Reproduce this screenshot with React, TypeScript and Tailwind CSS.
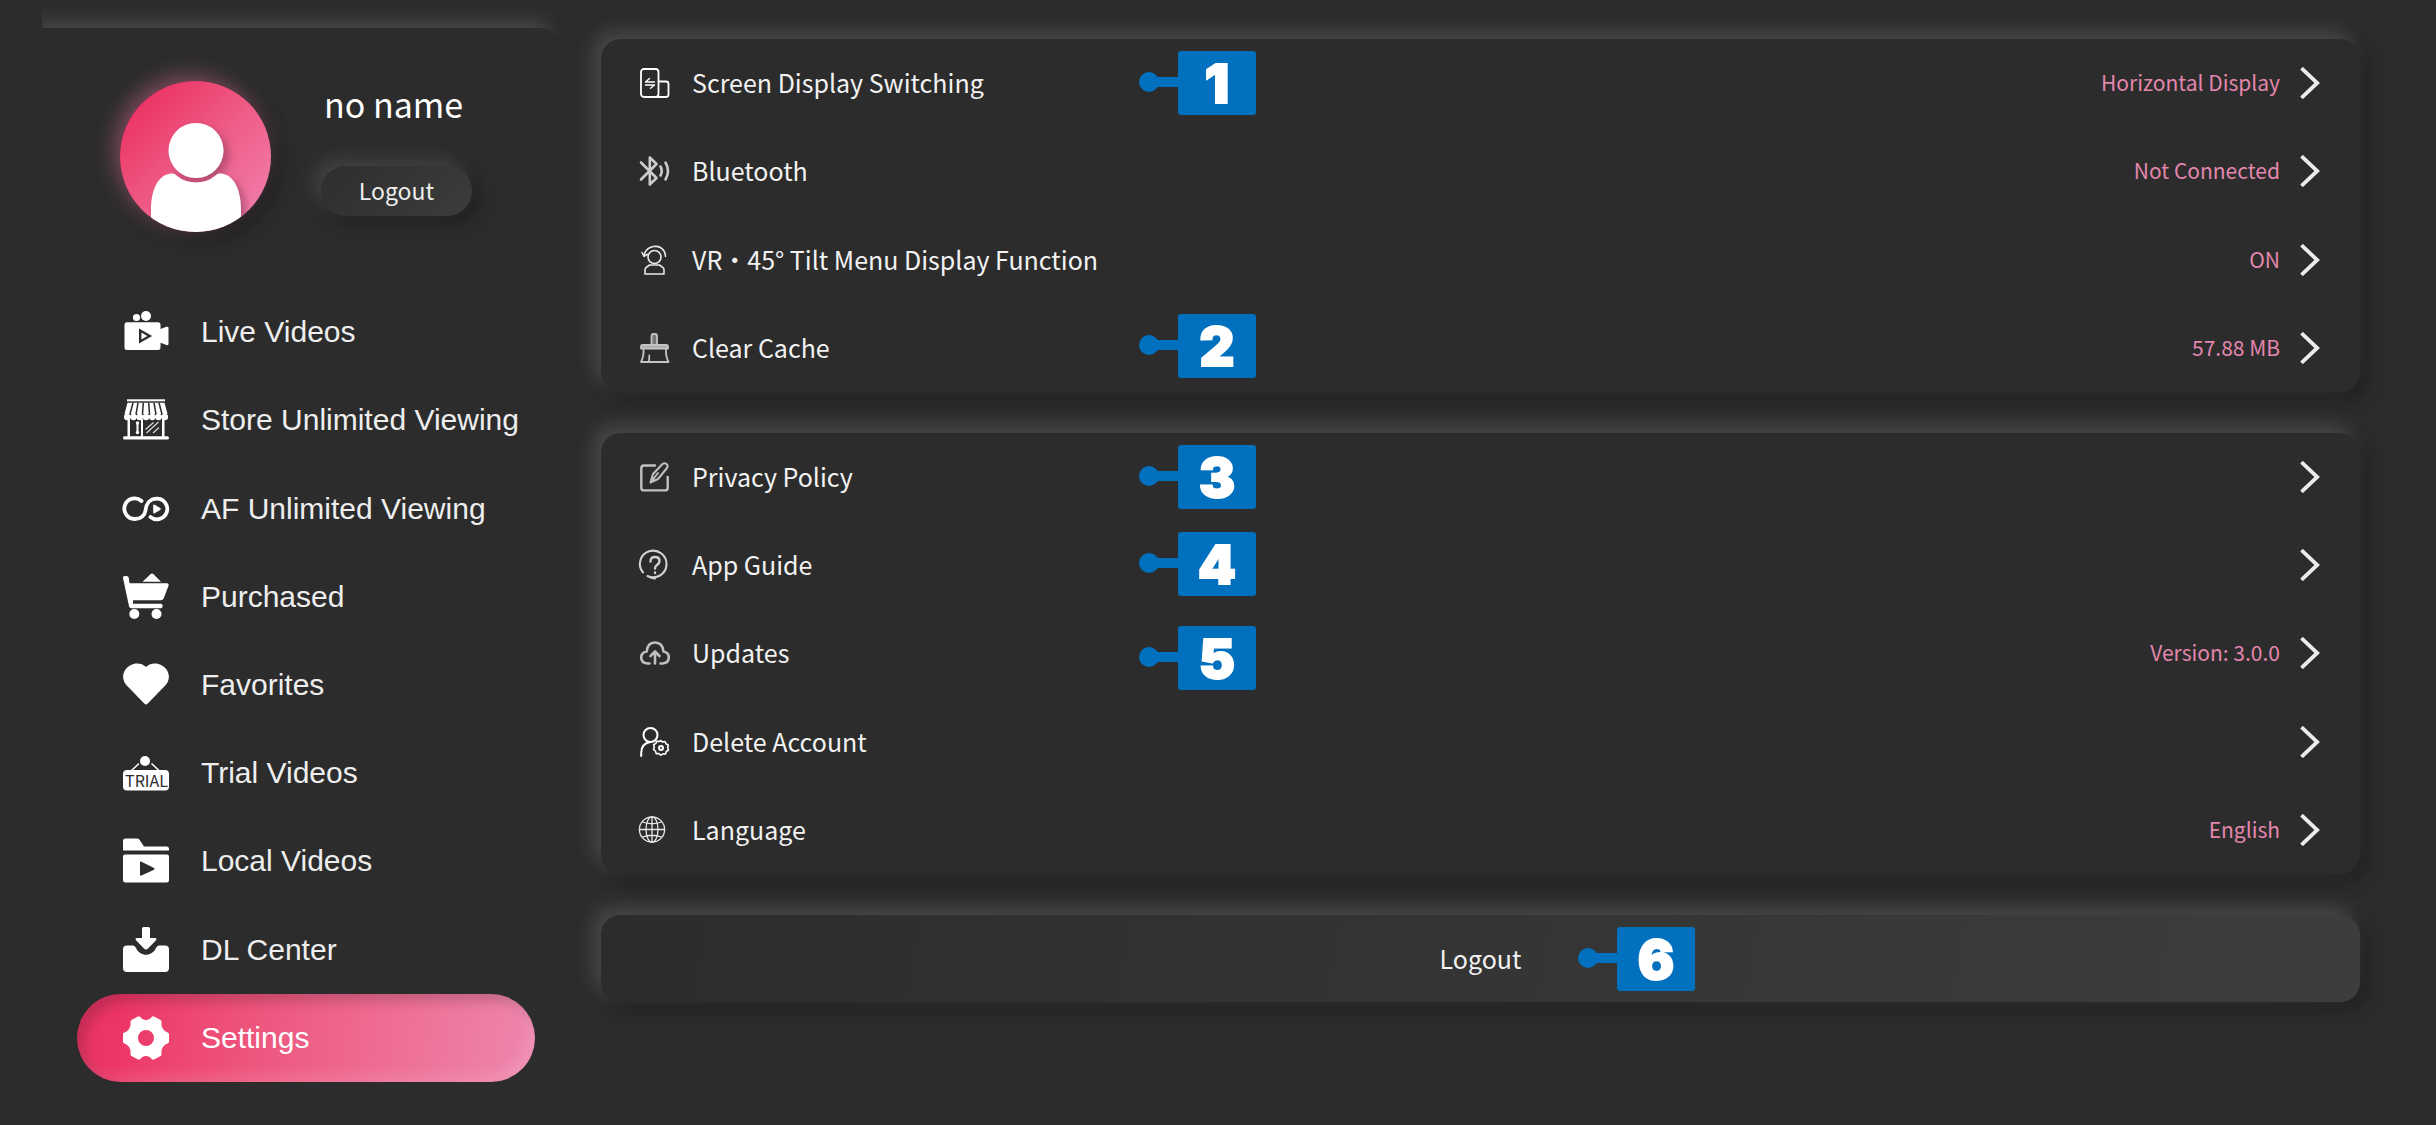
import type { ReactNode } from 'react';

const cjk = "font-['Noto_Sans_CJK_JP',sans-serif]";

/* ---------- sidebar icons (48 x 48 box) ---------- */

function NavSvg({ children }: { children: ReactNode }) {
  return (
    <svg viewBox="0 0 48 48" className="size-12 shrink-0" fill="#fff" aria-hidden="true">
      {children}
    </svg>
  );
}

const LiveIcon = () => (
  <NavSvg>
    <circle cx="14.500" cy="9.500" r="3.600" />
    <circle cx="24" cy="8" r="5" />
    <path d="M5 14.300h31a2.500 2.500 0 0 1 2.500 2.500v4.200l6-2.200q2-.6 2 1.200v16q0 1.600-2 1l-6-2.200v4.600a2.500 2.500 0 0 1-2.500 2.500H5a2.500 2.500 0 0 1-2.500-2.500V16.800A2.500 2.500 0 0 1 5 14.300z" />
    <path d="M18.200 22.500v11l9.500-5.500z" fill="none" stroke="#2c2c2c" strokeWidth="2.400" />
  </NavSvg>
);

const StoreIcon = () => (
  <NavSvg>
    <rect x="5" y="3.300" width="38" height="2" />
    <path d="M5.500 6.800h37l3.500 13v2H2v-2z" />
    <g stroke="#2c2c2c" strokeWidth="1.500">
      <path d="M11 6.800 8 18.300M16 6.800l-2 11.500M21.300 6.800l-.8 11.500M26.700 6.800l.8 11.500M32 6.800l2 11.500M37 6.800l3 11.500" />
    </g>
    <rect x="1.500" y="18" width="45" height="1.400" fill="#2c2c2c" />
    {[5.2, 11.5, 17.7, 24, 30.3, 36.5, 42.8].map((x) => (
      <circle key={x} cx={x} cy="21" r="3.200" />
    ))}
    <rect x="5.500" y="23" width="2.500" height="18" />
    <rect x="19" y="23" width="2" height="18" />
    <rect x="40" y="23" width="2.500" height="18" />
    <rect x="1" y="40.300" width="46" height="3.200" rx="1.600" />
    <rect x="14.500" y="27" width="2" height="9" />
    <circle cx="15.500" cy="27" r="1.700" />
    <circle cx="15.500" cy="36.500" r="1.700" />
    <path d="M23.500 33.500l8-7M24.500 37l12-11M31 37l6-5.500" stroke="#ddd" strokeWidth="1.200" />
  </NavSvg>
);

const InfinityIcon = () => (
  <NavSvg>
    <path
      d="M19.500 16A10.300 10.300 0 1 0 12.800 34C19.500 34 22.800 30 23.500 25.500C24 19.500 27.500 13.700 35 13.700A10.300 10.300 0 1 1 28.500 32"
      fill="none"
      stroke="#fff"
      strokeWidth="3.800"
      strokeLinecap="round"
    />
    <path d="M31.200 20.600q0-1.700 1.500-.9l5.500 3.400q1.200.9 0 1.800L32.700 28.300q-1.500.8-1.500-.9z" />
  </NavSvg>
);

const CartIcon = () => (
  <NavSvg>
    <path d="M20.500 8.700 28.500 1.200q1.500-1.200 3 0l7.500 7.500z" />
    <path d="M7.500 10.300h37.500q2.200.3 1.500 2.500l-4.700 12.500q-.9 2-3 2H11v3.500h28q1.700.3 1.700 2.200t-1.700 2.200H9.500q-2 0-2.500-2L1 5q-.3-2 2-2h1.500q2 0 2.300 2z" />
    <circle cx="12.300" cy="41" r="5" />
    <circle cx="34.500" cy="41" r="5" />
  </NavSvg>
);

const HeartIcon = () => (
  <NavSvg>
    <path d="M24 6C28 2.200 34.500 1.600 39.500 4.200C47.500 8.500 49.500 18 43 24.800L25.500 42.800q-1.500 1.400-3 0L5 24.800C-1.500 18 .5 8.500 8.500 4.200C13.500 1.600 20 2.200 24 6z" />
  </NavSvg>
);

const TrialIcon = () => (
  <NavSvg>
    <circle cx="23" cy="12" r="5" />
    <path d="M17 14.500 9.500 21.500M29.500 14.500l7.500 7" stroke="#fff" strokeWidth="1.600" />
    <rect x="1" y="21" width="46" height="20.500" rx="4" />
    <text
      x="24.500"
      y="37.500"
      textAnchor="middle"
      fontFamily="'Noto Sans CJK JP', sans-serif"
      fontSize="16"
      fill="#2c2c2c"
    >
      TRIAL
    </text>
  </NavSvg>
);

const FolderIcon = () => (
  <NavSvg>
    <path d="M1 13.500V4q0-2.500 2.500-2.500H15q1.500 0 2.500 1.200L22 9.500h22.500q2.500 0 2.500 2.500v1.500z" />
    <path
      fillRule="evenodd"
      d="M3 17.500h42q2 0 2 2V43q0 2.500-2.500 2.500h-41Q1 45.500 1 43V19.500q0-2 2-2zM18 25.500v12q0 1.500 1.500 1l12-5.500q2-1.200 0-2.300l-12-6q-1.500-.6-1.500.8z"
    />
  </NavSvg>
);

const DownloadIcon = () => (
  <NavSvg>
    <path d="M21.500 1h5q1.500 0 1.500 1.500V12h5.500q1.800.6.500 2.200l-8.200 8.600q-1.800 1.500-3.600 0l-8.200-8.600q-1.300-1.600.5-2.200H20V2.500Q20 1 21.500 1z" />
    <path d="M5 19.500h6q2 0 3 2.500c4 9 16 9 20 0q1-2.500 3-2.500h6q4 0 4 4V42q0 4-4 4H5q-4 0-4-4V23.500q0-4 4-4z" />
  </NavSvg>
);

const GearIcon = () => (
  <NavSvg>
    <path
      fillRule="evenodd"
      d="M8.500 8q0-1 1-2l6-3.300q1.800-.9 3 .5l1.500 1.600q4 2.400 8 0l1.500-1.600q1.200-1.400 3-.5l6 3.300q1.300 1 1 2.200-.8 5.800 4 9.300l2.200 1q1.300.7 1.300 2v7q0 1.300-1.300 2l-2.200 1q-4.800 3.500-4 9.300.3 1.200-1 2.200l-6 3.300q-1.800.9-3-.5L28 43.200q-4-2.400-8 0l-1.500 1.600q-1.200 1.400-3 .5l-6-3.300q-1.300-1-1-2.200.8-5.800-4-9.300l-2.200-1Q1 28.800 1 27.500v-7q0-1.300 1.300-2l2.200-1q4.800-3.500 4-9.500zM24 16a8 8 0 1 0 0 16 8 8 0 0 0 0-16z"
    />
  </NavSvg>
);

/* ---------- setting row icons (30 x 30 box) ---------- */

function RowSvg({ children, width = 1.8, color = '#e8e8e8' }: { children: ReactNode; width?: number; color?: string }) {
  return (
    <svg
      viewBox="0 0 30 30"
      className="size-[30px] shrink-0 overflow-visible"
      fill="none"
      stroke={color}
      strokeWidth={width}
      strokeLinecap="round"
      strokeLinejoin="round"
      aria-hidden="true"
    >
      {children}
    </svg>
  );
}

const ScreenIcon = () => (
  <RowSvg color="#fff">
    <rect x="1" y="1" width="17.500" height="28" rx="3" />
    <path d="M18.500 13.500H26q2.500 0 2.500 2.500v10.500q0 2.500-2.500 2.500H15" />
    <path d="M5.500 14h9M5.500 14l4-3.500M14.500 17h-9M14.500 17l-4 3.200" strokeWidth="1.400" />
  </RowSvg>
);

const BluetoothIcon = () => (
  <RowSvg width={2.6} color="#cccccc">
    <path d="M1 6.500 16.500 22 9.800 28.500V1.500L16.500 8 1 23.500" />
    <path d="M20.500 10.500q2.500 4.500 0 9M25.500 6.500q5 8.500 0 17" />
  </RowSvg>
);

const TiltIcon = () => (
  <RowSvg width={1.6}>
    <circle cx="14.500" cy="12" r="6.500" />
    <path d="M5 29v-4q0-1.500 1-2.300L9.500 20h10l3.500 2.700q1 .8 1 2.300v4z" />
    <path d="M4.200 9.500C7 .5 19-1.500 24 6q1.200 2 1.500 5.500M2 7.500l2 3.800 3.500-2" />
  </RowSvg>
);

const BroomIcon = () => (
  <RowSvg color="#c4c4c4">
    <path d="M11.500 12V3q0-2 2-2h1.500q2 0 2 2v9" fill="#777" />
    <path d="M1 15.500v-2q0-1.500 1.500-1.500h24q1.500 0 1.500 1.500v2z" fill="#aaa" />
    <path d="M3.500 16Q4 23 1 29h27.500Q25.500 23 26 16M8.500 29q1-3 .8-6.500" />
  </RowSvg>
);

const EditIcon = () => (
  <RowSvg width={2.4} color="#c0c0c0">
    <path d="M15 3.500H4q-2.700 0-2.700 2.700v19.500q0 2.700 2.700 2.700h21q2.700 0 2.700-2.700V15" />
    <path d="M10.500 20.500 13 12 22.500 2q2-1.500 4 0t.5 4L18 17zM10.500 20.500 18 11" strokeWidth="2" />
  </RowSvg>
);

const HelpIcon = () => (
  <RowSvg width={2.1} color="#d2d2d2">
    <path d="M3 22.500A13.300 13.300 0 1 1 7.500 26M7.500 26q3.500 2.400 7.500 2.400" />
    <path d="M10.500 11.500q0-4.500 4.500-4.500t4.500 4q0 2.300-2.500 4-2 1.200-2 3.500M15 22.500v.5" strokeWidth="2.400" />
  </RowSvg>
);

const CloudIcon = () => (
  <RowSvg width={2.600} color="#c0c0c0">
    <path d="M9.500 25.500H7.500Q1.200 25 1.200 19.500q0-5 5.500-6Q7.500 4.500 15 4.500t8.500 9q5.300 1 5.300 6 0 5.500-6.300 6H20.500" />
    <path d="M15 25.500V14M10.500 18l4.500-4.500 4.500 4.500" />
  </RowSvg>
);

const AccountIcon = () => (
  <RowSvg color="#fff" width={2}>
    <circle cx="10.500" cy="8" r="7" />
    <path d="M1.200 29v-3q0-9.500 9-11" />
    <path
      d="M20.500 13.500l2 1.500 2.500-.5 1 2.300 2.200 1.200-.5 2.500.8 2.500-2.200 1.500-.8 2.500-2.500-.2-2.200 1.400-2-1.600-2.600 0-.7-2.500-2-1.600.8-2.300-.7-2.500 2.200-1.300 1-2.300 2.500.4z"
      strokeWidth="1.600"
    />
    <circle cx="21" cy="21" r="2" />
  </RowSvg>
);

const GlobeIcon = () => (
  <RowSvg width={1.3}>
    <circle cx="12" cy="14.500" r="12.600" />
    <ellipse cx="12" cy="14.500" rx="6" ry="12.600" />
    <path d="M12 2v25M-.5 14.500h25M2.500 7q9.500 3.500 19 0M2.500 22q9.500-3.500 19 0" />
  </RowSvg>
);

const Chevron = () => (
  <svg viewBox="0 0 20 32" className="h-8 w-5 shrink-0" fill="none" stroke="#ececec" strokeWidth="3.800" aria-hidden="true">
    <path d="M1.500 1.200 17.200 16 1.500 30.800" />
  </svg>
);

/* ---------- numbered callout ---------- */

function Callout({ label, place }: { label: string; place: string }) {
  return (
    <div className={`pointer-events-none absolute flex items-center ${place}`}>
      <span className="flex items-center pb-[3px]">
        <span className="size-5 rounded-full bg-[#0070bf]" />
        <span className="-ml-1 h-2.5 w-[23px] bg-[#0070bf]" />
      </span>
      <span className="flex h-16 w-[78px] items-center justify-center rounded-[3px] bg-[#0070bf] pt-0.5 font-['Inter',sans-serif] text-[54px] leading-[62px] font-black text-white [-webkit-text-stroke:2px_#fff]">
        {label}
      </span>
    </div>
  );
}

/* ---------- data ---------- */

const nav = [
  { label: 'Live Videos', Icon: LiveIcon },
  { label: 'Store Unlimited Viewing', Icon: StoreIcon },
  { label: 'AF Unlimited Viewing', Icon: InfinityIcon },
  { label: 'Purchased', Icon: CartIcon },
  { label: 'Favorites', Icon: HeartIcon },
  { label: 'Trial Videos', Icon: TrialIcon },
  { label: 'Local Videos', Icon: FolderIcon },
  { label: 'DL Center', Icon: DownloadIcon },
  { label: 'Settings', Icon: GearIcon, active: true },
];

type Row = { label: string; value?: string; Icon: () => ReactNode };

const display: Row[] = [
  { label: 'Screen Display Switching', value: 'Horizontal Display', Icon: ScreenIcon },
  { label: 'Bluetooth', value: 'Not Connected', Icon: BluetoothIcon },
  { label: 'VR・45° Tilt Menu Display Function', value: 'ON', Icon: TiltIcon },
  { label: 'Clear Cache', value: '57.88 MB', Icon: BroomIcon },
];

const about: Row[] = [
  { label: 'Privacy Policy', Icon: EditIcon },
  { label: 'App Guide', Icon: HelpIcon },
  { label: 'Updates', value: 'Version: 3.0.0', Icon: CloudIcon },
  { label: 'Delete Account', Icon: AccountIcon },
  { label: 'Language', value: 'English', Icon: GlobeIcon },
];

const raised = 'shadow-[-8px_-8px_18px_#484848,8px_8px_16px_#222222]';

function Card({ rows, size, children }: { rows: Row[]; size: string; children: ReactNode }) {
  return (
    <section className={`relative grid auto-rows-fr rounded-[20px] bg-[#2c2c2c] ${raised} ${size}`}>
      {rows.map(({ label, value, Icon }) => (
        <button key={label} type="button" className="flex items-center pr-10 pl-[39px] text-left">
          <Icon />
          <span className="ml-[22px] flex-1 pb-0.5 text-[25px] leading-10 text-[#f2f2f2]">{label}</span>
          {value && <span className="mr-5 pb-0.5 text-[21px] leading-8 text-[#e387ac]">{value}</span>}
          <Chevron />
        </button>
      ))}
      {children}
    </section>
  );
}

function Avatar() {
  return (
    <div className="size-[151px] shrink-0 rounded-full bg-linear-135 from-[#ec3566] from-15% to-[#f083b3] shadow-[-6px_-6px_20px_#7a4a5e,8px_8px_16px_#202020]">
      <svg viewBox="0 0 151 151" className="size-full overflow-hidden rounded-full" role="img" aria-label="Profile picture">
        <defs>
          <filter id="soft" x="-30%" y="-30%" width="160%" height="160%">
            <feDropShadow dx="5" dy="5" stdDeviation="4" floodColor="#8c3a5c" floodOpacity="0.6" />
          </filter>
        </defs>
        <g fill="#fff" filter="url(#soft)">
          <ellipse cx="76" cy="69.500" rx="27.500" ry="27.500" />
          <path d="M31 151v-22c0-20 7-36 21-36.500q3 0 4.500 2 8 7 19.500 7t19.500-7q1.500-2 4.500-2c14 .5 21 16.500 21 36.500v22z" />
        </g>
      </svg>
    </div>
  );
}

export default function App() {
  return (
    <div className={`flex min-h-screen bg-[#2c2c2c] text-white ${cjk}`}>
      <div className="ml-[42px] shrink-0 overflow-hidden pt-7">
        <aside className="h-full w-[518px] rounded-tr-[20px] bg-[#2c2c2c] pt-[53px] pr-[25px] pl-[35px] shadow-[-8px_-8px_18px_#484848,8px_8px_16px_#222222]">
          <div className="flex pl-[43px]">
            <Avatar />
            <div className="ml-[50px]">
              <p className="pl-[3px] text-[34px] leading-[46px]">no name</p>
              <button
                type="button"
                className="mt-[39px] block h-[50px] w-[151px] rounded-full bg-linear-135 from-[#2e2e2e] to-[#3c3c3c] pb-0.5 text-[23px] leading-8 text-[#eee] shadow-[-8px_-8px_16px_#404040,8px_8px_16px_#222222]"
              >
                Logout
              </button>
            </div>
          </div>
          <nav className="mt-14 grid min-h-[794px] auto-rows-fr">
            {nav.map(({ label, Icon, active }) => (
              <a
                key={label}
                href="#"
                aria-current={active ? 'page' : undefined}
                className={`flex items-center rounded-full pl-[45px] font-['Liberation_Sans',Arial,sans-serif] text-[30px] leading-10 ${
                  active
                    ? 'bg-linear-100 from-[#ec3566] from-10% to-[#ee86ae] text-white shadow-[inset_8px_8px_12px_#0000002a,inset_-8px_-8px_12px_#ffffff1c]'
                    : 'text-[#eee]'
                }`}
              >
                <Icon />
                <span className="ml-[31px]">{label}</span>
              </a>
            ))}
          </nav>
        </aside>
      </div>

      <main className="mr-19 ml-[41px] flex flex-1 flex-col gap-[41px] pt-[39px]">
        <Card rows={display} size="min-h-[353px]">
          <Callout label="1" place="top-3 left-[538px]" />
          <Callout label="2" place="top-[275px] left-[538px]" />
        </Card>
        <Card rows={about} size="min-h-[441px]">
          <Callout label="3" place="top-3 left-[538px]" />
          <Callout label="4" place="top-[99px] left-[538px]" />
          <Callout label="5" place="top-[193px] left-[538px]" />
        </Card>
        <div className="relative">
          <button
            type="button"
            className={`block h-[87px] w-full rounded-[20px] bg-linear-100 from-[#2c2c2c] to-[#3d3d3d] pb-0.5 text-[25px] leading-10 text-[#f2f2f2] ${raised}`}
          >
            Logout
          </button>
          <Callout label="6" place="top-3 left-[977px]" />
        </div>
      </main>
    </div>
  );
}
